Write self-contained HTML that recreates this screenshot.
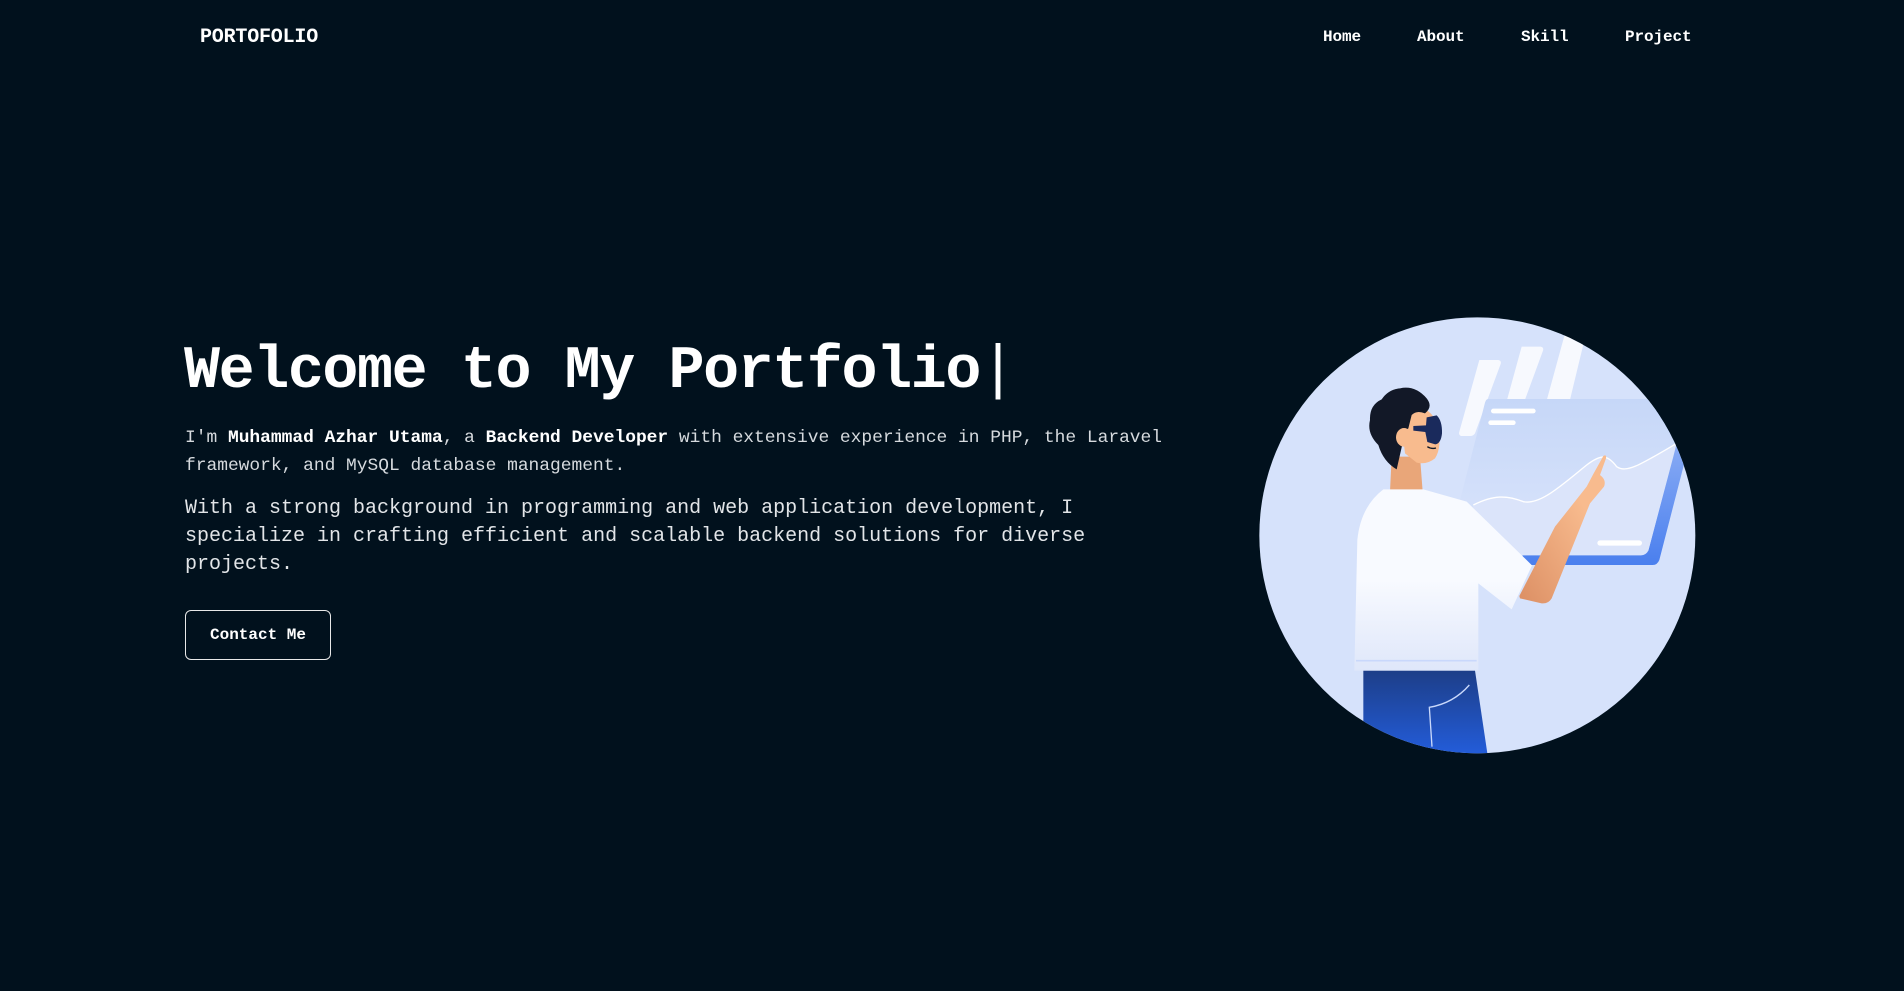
<!DOCTYPE html>
<html><head><meta charset="utf-8"><style>
*{margin:0;padding:0;box-sizing:border-box}
html,body{width:1904px;height:991px;overflow:hidden;background:#01111d;font-family:"Liberation Mono","DejaVu Sans Mono",monospace;color:#fff}
.logo{position:absolute;left:200px;top:26px;font-size:20px;font-weight:bold;line-height:24px;letter-spacing:-0.2px}
.nav a{position:absolute;top:26px;font-size:16px;font-weight:bold;line-height:22px;color:#fff;text-decoration:none;letter-spacing:-0.1px}
h1{position:absolute;left:184px;top:334px;font-size:60px;line-height:76px;font-weight:bold;letter-spacing:-1.4px;white-space:nowrap}
h1 span{font-weight:normal;letter-spacing:0}
.p1{position:absolute;left:185px;top:424px;font-size:17.9px;line-height:28px;color:#d6dade;white-space:nowrap;letter-spacing:0px}
.p1 b{color:#fff}
.p2{position:absolute;left:185px;top:495px;font-size:20px;line-height:28px;color:#e2e5e8;white-space:nowrap}
.btn{position:absolute;left:185px;top:610px;width:146px;height:50px;border:1px solid #e8e8e8;border-radius:6px;font-size:16px;font-weight:bold;line-height:48px;text-align:center;color:#fff}
svg{position:absolute;left:1240px;top:300px}
</style></head><body>
<div class="logo">PORTOFOLIO</div>
<div class="nav"><a style="left:1323px">Home</a><a style="left:1417px">About</a><a style="left:1521px">Skill</a><a style="left:1625px">Project</a></div>
<h1>Welcome to My Portfolio<span>|</span></h1>
<div class="p1">I'm <b>Muhammad Azhar Utama</b>, a <b>Backend Developer</b> with extensive experience in PHP, the Laravel<br>framework, and MySQL database management.</div>
<div class="p2">With a strong background in programming and web application development, I<br>specialize in crafting efficient and scalable backend solutions for diverse<br>projects.</div>
<div class="btn">Contact Me</div>
<svg width="480" height="470" viewBox="0 0 1440 1410">
<defs>
<clipPath id="c"><circle cx="712" cy="706" r="654"/></clipPath>
<linearGradient id="pan" x1="0" y1="0" x2="0" y2="1"><stop offset="0" stop-color="#c6d7f8"/><stop offset="1" stop-color="#dbe5fb"/></linearGradient>
<linearGradient id="back" x1="0" y1="0" x2="0" y2="1"><stop offset="0" stop-color="#9bb8f6"/><stop offset="1" stop-color="#4a7fee"/></linearGradient>
<linearGradient id="pants" x1="0" y1="0" x2="0" y2="1"><stop offset="0" stop-color="#1d3e88"/><stop offset="1" stop-color="#2461e6"/></linearGradient>
<linearGradient id="shirt" x1="0" y1="0" x2="0" y2="1"><stop offset="0.5" stop-color="#f8faff"/><stop offset="1" stop-color="#dfe7fa"/></linearGradient>
<linearGradient id="arm" x1="1" y1="0" x2="0" y2="1"><stop offset="0.3" stop-color="#f8bb8e"/><stop offset="1" stop-color="#dc8f64"/></linearGradient>
</defs>
<circle cx="712" cy="706" r="654" fill="#d6e2fb"/>
<g clip-path="url(#c)">
<path d="M718 180 L775 180 Q785 182 782 192 L705 400 Q700 408 690 408 L663 408 Q655 405 658 395 Z" fill="#f7f9fe"/>
<path d="M845 140 L902 140 Q912 142 909 152 L840 340 L790 340 Z" fill="#f7f9fe"/>
<path d="M980 82 L1030 82 Q1042 84 1039 96 L985 320 L915 320 Z" fill="#f7f9fe"/>
<path d="M760 325 L1362 325 Q1375 328 1371 342 L1258 780 Q1252 795 1238 795 L862 795 L850 780 Z" fill="url(#back)"/>
<path d="M745 297 L1330 297 Q1343 298 1340 312 L1225 752 Q1218 766 1203 766 L650 766 L650 640 L735 308 Q738 297 745 297 Z" fill="url(#pan)"/>
<path d="M700 615 C760 585 800 585 850 605 C900 615 960 560 1040 495 C1080 465 1100 460 1130 500 C1160 520 1200 495 1310 430 L1300 470 L1225 752 L690 760 Z" fill="#dbe4fa"/>
<path d="M700 615 C760 585 800 585 850 605 C900 615 960 560 1040 495 C1080 465 1100 460 1130 500 C1160 520 1200 495 1310 430" fill="none" stroke="#fff" stroke-width="4"/>
<rect x="753" y="326" width="134" height="14" rx="7" fill="#fff"/>
<rect x="745" y="361" width="82" height="14" rx="7" fill="#fff"/>
<rect x="1072" y="721" width="134" height="16" rx="8" fill="#fff"/>
<path d="M370 1112 L705 1112 L748 1400 L370 1400 Z" fill="url(#pants)"/>
<path d="M688 1155 Q640 1210 568 1222 L576 1340" fill="none" stroke="#c9d8fb" stroke-width="4"/>
<path d="M455 470 L540 470 L548 575 L450 575 Z" fill="#e9a679"/>
<path d="M430 568 L550 568 L680 605 L876 796 L815 928 L715 850 L715 1112 L343 1112 L352 720 Q362 620 430 568 Z" fill="url(#shirt)"/>
<line x1="348" y1="1082" x2="710" y2="1082" stroke="#c9d8fb" stroke-width="5"/>
<path d="M838 888 L945 680 L1040 560 L1060 522 L1090 468 Q1100 462 1098 475 L1080 525 Q1100 540 1092 560 L1050 610 L935 895 Q925 912 905 910 L840 895 Z" fill="url(#arm)"/>
<path d="M480 330 Q560 300 592 370 Q608 440 585 475 Q560 495 530 488 L495 460 Z" fill="#f8bb8e"/>
<path d="M480 265 Q525 255 560 295 Q580 320 555 340 Q530 330 515 345 L505 385 Q490 395 490 420 L470 508 Q430 485 415 435 Q380 400 390 360 Q388 315 425 298 Q445 268 480 265 Z" fill="#121827"/>
<ellipse cx="492" cy="412" rx="24" ry="28" fill="#f8bb8e"/>
<path d="M520 378 L558 376 L560 352 L590 346 Q607 362 606 400 Q603 430 586 433 L562 426 L556 396 L520 392 Z" fill="#1a2a5c"/>
<path d="M562 440 Q575 448 588 444" stroke="#121827" stroke-width="4" fill="none"/>
</g>
</svg>
</body></html>
